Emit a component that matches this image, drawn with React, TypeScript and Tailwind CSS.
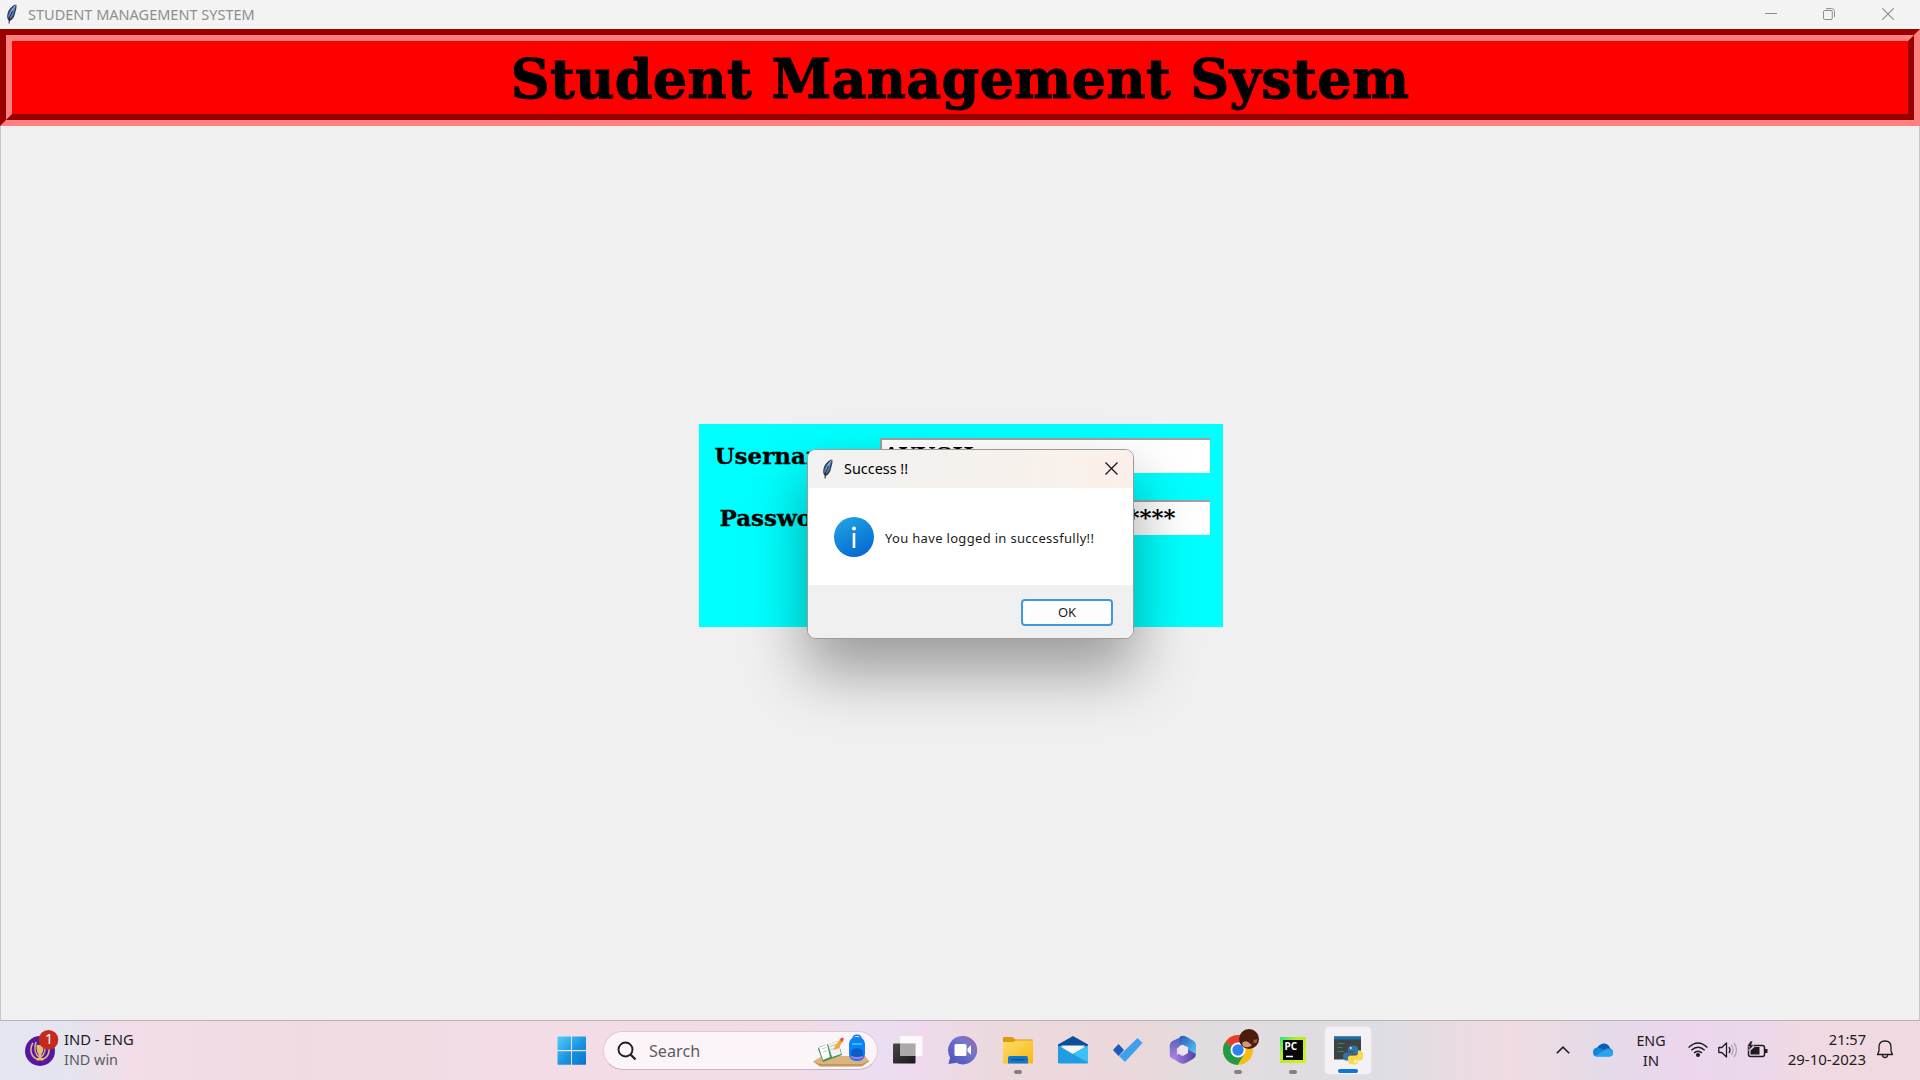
import React from "react";

const segoe = "font-['Noto_Sans',sans-serif]";
const bookman = "font-['DejaVu_Serif',serif] font-bold";

function Feather({ className }: { className?: string }) {
  return (
    <svg viewBox="0 0 12 20" className={className}>
      <path d="M10.200.5C7 .8 3 4.500 1.700 9c-.7 2.600-.6 4.500 0 6.200L3.200 17c3-.6 5-3.500 5.700-7C9.700 6.500 11.200 3 10.200.5Z" fill="#343a47" />
      <path d="M9.600 1.600C6.500 3.500 3.500 6.800 2.500 10.500c-.4 2-.2 3.300.6 4.700 2.600-1 4.200-3.700 4.900-6.700.5-2.300 1.600-4.200 1.600-6.900Z" fill="#4c82ca" />
      <path d="M9.600 1.500C7 3.500 4.800 8 3.700 13" stroke="#bcd4f0" strokeWidth=".8" fill="none" />
      <path d="M6.500 7 3.300 14l-.2 5.500" stroke="#1a1d22" strokeWidth="1" fill="none" />
    </svg>
  );
}

function WindowButtons() {
  return (
    <div className="flex items-center pr-[26px]">
      <svg viewBox="0 0 12 12" className="h-[12px] w-[12px]" fill="none" stroke="#8c8c8c">
        <path d="M0 5.500h12" />
      </svg>
      <svg viewBox="0 0 12 12" className="ml-[46px] h-[12px] w-[12px]" fill="none" stroke="#8c8c8c">
        <rect x=".5" y="2.500" width="8.800" height="9" rx="1.300" />
        <path d="M3 .6h5.500a3 3 0 0 1 3 3V9" />
      </svg>
      <svg viewBox="0 0 12 12" className="ml-[47px] h-[12px] w-[12px]" fill="none" stroke="#8c8c8c" strokeWidth="1.1">
        <path d="m.3.3 11.400 11.400M11.700.3.3 11.700" />
      </svg>
    </div>
  );
}

function AppTitleBar() {
  return (
    <header className="flex h-[29px] shrink-0 items-center bg-[#f3f3f3] pb-px">
      <Feather className="ml-[6px] h-[20px] w-[12px]" />
      <div className={`${segoe} ml-[10px] flex-1 text-[#8e8e8e]`}>
        <span className="inline-block origin-left scale-x-[0.967] whitespace-nowrap text-[15px] leading-[20px]">STUDENT MANAGEMENT SYSTEM</span>
      </div>
      <WindowButtons />
    </header>
  );
}

function Banner() {
  return (
    <div className="h-[97px] shrink-0 border-[6px] border-t-[#990000] border-r-[#ff8080] border-b-[#ff8080] border-l-[#990000]">
      <div className="flex h-full items-center justify-center border-[6px] border-t-[#ff8080] border-r-[#990000] border-b-[#990000] border-l-[#ff8080] bg-[#ff0000] pt-[3px]">
        <h1 className={`${bookman} whitespace-nowrap text-[54px] leading-none tracking-[0.3px] text-black [-webkit-text-stroke:1px_black]`}>Student Management System</h1>
      </div>
    </div>
  );
}

function Entry({ children }: { children: React.ReactNode }) {
  return (
    <div className={`${bookman} flex h-[35px] w-[330px] items-start border-t-2 border-l-2 border-[#a0a0a0] bg-white pl-[2px] text-[23px] leading-[27px] text-black`}>
      {children}
    </div>
  );
}

function LoginForm() {
  return (
    <form className="mt-[298px] ml-px flex h-[203px] w-[524px] flex-col gap-[27px] self-center bg-[#00ffff] pt-[14px] pr-[13px]">
      <div className="flex justify-between pl-[16px]">
        <label className={`${bookman} pt-[4px] text-[23px] leading-[27px] [-webkit-text-stroke:0.3px_black]`}>Username</label>
        <Entry>
          <span className="-ml-px pt-[1px]">AYUSH</span>
        </Entry>
      </div>
      <div className="flex justify-between pl-[21px]">
        <label className={`${bookman} pt-[4px] text-[23px] leading-[27px] [-webkit-text-stroke:0.3px_black]`}>Password</label>
        <Entry>
          <span className="w-[292px] pt-[1px] text-right">****</span>
        </Entry>
      </div>
    </form>
  );
}

function Dialog() {
  return (
    <div className={`${segoe} absolute top-[449px] left-[807px] flex h-[190px] w-[327px] flex-col overflow-hidden rounded-[9px] border border-[#9b9b9b] bg-white text-black shadow-[0_32px_60px_2px_rgba(0,0,0,0.35)]`}>
      <div className="flex h-[38px] items-center bg-gradient-to-r from-[#f2f2f2] via-[#f5f1ed] to-[#fbf0e9] pr-[15px] pb-px pl-[14px]">
        <Feather className="h-[20px] w-[12px]" />
        <span className="-mt-px ml-[10px] flex-1">
          <span className="inline-block origin-left scale-x-[0.96] text-[15px] leading-[20px]">Success !!</span>
        </span>
        <svg viewBox="0 0 13 13" className="h-[13px] w-[13px]" fill="none" stroke="#111" strokeWidth="1.2">
          <path d="m.5.500 12 12M12.500.5l-12 12" />
        </svg>
      </div>
      <div className="flex h-[97px] items-center pl-[26px]">
        <svg viewBox="0 0 40 40" className="h-[40px] w-[40px]">
          <defs>
            <linearGradient id="info" x1=".2" y1="0" x2=".7" y2="1">
              <stop offset="0" stopColor="#20a2e4" />
              <stop offset="1" stopColor="#0469d0" />
            </linearGradient>
          </defs>
          <circle cx="20" cy="20" r="20" fill="url(#info)" />
          <circle cx="20" cy="11.5" r="2" fill="#fff" />
          <path d="M20 16v15" stroke="#fff" strokeWidth="2.6" />
        </svg>
        <span className="ml-[11px] whitespace-nowrap pt-[4px] text-[13px] tracking-[0.32px] text-[#1c1c1c]">You have logged in successfully!!</span>
      </div>
      <div className="flex flex-1 items-start justify-end bg-[#f0f0f0] pt-[14px] pr-[20px]">
        <button className="flex h-[27px] w-[92px] items-center justify-center rounded-[4px] border-2 border-[#3f97de] bg-[#fdfdfd] text-[13px] text-[#1c1c1c]">OK</button>
      </div>
    </div>
  );
}

function Weather() {
  return (
    <div className="flex w-[160px] items-center pb-[4px]">
      <svg viewBox="0 0 36 38" className="ml-[24px] h-[38px] w-[36px]">
        <circle cx="16" cy="21" r="15" fill="#56189e" />
        <path d="M9 13c-4 6-2 14 4 16M23 13c4 6 2 14-4 16M12 12c-2 6-1 12 3 15M20 12c2 6 1 12-3 15" stroke="#dfb583" strokeWidth="1.6" fill="none" />
        <path d="M12.500 15h7c0 6-1 8-2.500 10v3h2.500v2.500h-7V28H15v-3c-1.500-2-2.500-4-2.500-10Z" fill="#e7bd70" />
        <circle cx="24.500" cy="9.800" r="9.8" fill="#c42b1c" />
      </svg>
      <span className={`${segoe} -mt-[20px] -ml-[15px] w-[12px] text-[14px] leading-none text-white`}>1</span>
      <div className={`${segoe} ml-[7px] text-[15px] leading-[20px]`}>
        <div className="origin-left scale-x-[0.985] whitespace-nowrap text-[#1b1b1b]">IND - ENG</div>
        <div className="origin-left scale-x-[0.96] text-[#5c5a5e]">IND win</div>
      </div>
    </div>
  );
}

function StartIcon() {
  return (
    <svg viewBox="0 0 30 30" className="h-[30px] w-[30px]">
      <defs>
        <linearGradient id="win" x1="0" y1="0" x2="1" y2="1">
          <stop offset="0" stopColor="#50d0fb" />
          <stop offset=".55" stopColor="#1a93e0" />
          <stop offset="1" stopColor="#0673cd" />
        </linearGradient>
      </defs>
      <path fill="url(#win)" d="M1 .5h13V14H.5V1zM15 .5h13.500l.5.500v13H15zM.5 15.200H14v13.500H1l-.5-.5zM15 15.200h14v13l-.5.500H15z" />
    </svg>
  );
}

function StudyArt() {
  return (
    <svg viewBox="0 0 60 36" className="h-[36px] w-[60px]">
      <path d="M3 28.500 12 23h43l4 5-7 5H10Z" fill="#dcb27f" />
      <path d="m3 28.500 7 2.500h42l7-3.500v1l-7 5H10z" fill="#c39660" />
      <path d="m8 16 1-2 19-6 4 14-19 7z" fill="#419557" />
      <path d="m9 14.500 8-3 3 12.500-7 3z" fill="#fff" />
      <path d="m18 11 10-3 3 13-9 3z" fill="#f3f1f4" />
      <path d="m12 16 4-1.500M13 19l4-1.500M20 13.500l6-2M21 16.500l6-2" stroke="#aaa" strokeWidth=".7" />
      <path d="m24 17 1-4 5-6.500 3 2-5 7z" fill="#f8a62b" />
      <path d="m29.500 7 2-2.500 2.500 1L32.500 9z" fill="#e64d48" />
      <path d="M43 6c0-5 8-5 8 0" stroke="#2071d8" strokeWidth="1.5" fill="none" />
      <rect x="39" y="4" width="16" height="24" rx="7" fill="#0b82f5" />
      <path d="M41 19c1-5 11-5 12 0v7H41z" fill="#0d5cc6" />
      <path d="M42 11h10" stroke="#38b9ff" strokeWidth="2" />
      <path d="M41 24q6 2 12 0" stroke="#bd76f1" strokeWidth="2" fill="none" />
    </svg>
  );
}

function SearchBox() {
  return (
    <div className="ml-[16px] flex h-[39px] w-[275px] items-center rounded-full border border-[#dfcbd8] border-b-[#c9b4c2] bg-[#fbf5f9]">
      <svg viewBox="0 0 20 20" className="ml-[13px] h-[20px] w-[20px]" fill="none" stroke="#242124" strokeWidth="1.9">
        <circle cx="8.500" cy="8.500" r="7" />
        <path d="m13.500 13.500 5 5" strokeWidth="2.3" />
      </svg>
      <span className={`${segoe} ml-[12px] flex-1 text-[#5f5b60]`}>
        <span className="inline-block origin-left scale-x-[0.95] text-[17px]">Search</span>
      </span>
      <div className="mr-[7px]">
        <StudyArt />
      </div>
    </div>
  );
}

function TaskIcon({ children, dot }: { children: React.ReactNode; dot?: boolean }) {
  return (
    <div className="flex h-full w-[55px] flex-col items-center pt-[12px]">
      <svg viewBox="0 0 32 34" className="h-[34px] w-[32px] overflow-visible">
        {children}
      </svg>
      {dot && <div className="mt-[3px] h-[4px] w-[8px] rounded-full bg-[#868082]" />}
    </div>
  );
}

function TaskIcons() {
  return (
    <div className="ml-[2px] flex h-full">
      <TaskIcon>
        <defs>
          <linearGradient id="tv" x1="0" y1="0" x2="1" y2="1">
            <stop offset="0" stopColor="#484848" />
            <stop offset="1" stopColor="#171717" />
          </linearGradient>
          <linearGradient id="chat" x1="1" y1="0" x2="0" y2="1">
            <stop offset="0" stopColor="#a45f9a" />
            <stop offset=".35" stopColor="#7577cb" />
            <stop offset="1" stopColor="#4a4dbc" />
          </linearGradient>
          <linearGradient id="folder" x1="0" y1="0" x2="1" y2="1">
            <stop offset="0" stopColor="#ffdc6b" />
            <stop offset="1" stopColor="#f9b80f" />
          </linearGradient>
          <linearGradient id="m365a" x1="0" y1="0" x2="0" y2="1">
            <stop offset="0" stopColor="#4c5fc0" />
            <stop offset="1" stopColor="#b482de" />
          </linearGradient>
          <linearGradient id="m365b" x1="0" y1="0" x2="1" y2="1">
            <stop offset="0" stopColor="#2c55b5" />
            <stop offset="1" stopColor="#53ccf5" />
          </linearGradient>
          <linearGradient id="m365c" x1="0" y1="0" x2="1" y2="0">
            <stop offset="0" stopColor="#b989e8" />
            <stop offset="1" stopColor="#4f3fa4" />
          </linearGradient>
          <linearGradient id="pc" x1="0" y1="0" x2="1" y2="1">
            <stop offset="0" stopColor="#1fe87c" />
            <stop offset=".35" stopColor="#b6ea2c" />
            <stop offset="1" stopColor="#d9f01e" />
          </linearGradient>
        </defs>
        <rect x="1" y="10.500" width="22.500" height="20" rx="1" fill="url(#tv)" />
        <rect x="8" y="3" width="22.500" height="20" rx="1" fill="#fff" fillOpacity=".8" />
        <path d="M8 10.500h15.500V23H8z" fill="#9c999b" fillOpacity=".75" />
      </TaskIcon>
      <TaskIcon>
        <path d="M15.500 3a14.200 14.200 0 1 1-6 26.800L1.500 31l1.600-6.500A14.300 14.300 0 0 1 15.500 3Z" fill="url(#chat)" />
        <rect x="7.500" y="11" width="12" height="12" rx="1.5" fill="#fff" />
        <path d="m20.500 15.500 3.500-3.300v9.600l-3.500-3.300z" fill="#fff" />
      </TaskIcon>
      <TaskIcon dot>
        <path d="M1 5q0-1 1-1h8.500l3 2.500H30q1 0 1 1V12H1z" fill="#dc9a0d" />
        <path d="M1 9h10l3-1.500h17V29.500q0 1-1 1H2q-1 0-1-1z" fill="url(#folder)" />
        <path d="M6 30.500V25q0-2 2-2h16q2 0 2 2v5.500z" fill="#1078cc" />
        <path d="M9.500 26.700h13" stroke="#0b4e92" strokeWidth="1.2" />
      </TaskIcon>
      <TaskIcon>
        <path d="M1 11.500 16 3l15 8.500v2H1z" fill="#0a4f9c" />
        <path d="M4 12.500h24L16 22z" fill="#f6f4f5" />
        <path d="M31 12.500v17q0 1-1 1H2q-1 0-1-1v-17l14.800 8.500z" fill="#219ce4" />
        <path d="M31 12.500v17L16 21z" fill="#3ac2f4" />
      </TaskIcon>
      <TaskIcon>
        <path d="m1 17 5.500-6 5.500 6-5.500 6z" fill="#1b59ba" />
        <path d="M7 23 25.500 5l5 5L13 29z" fill="#41a0ec" />
      </TaskIcon>
      <TaskIcon>
        <path d="M16 3 5.500 8Q2.800 9.500 2.800 12v10.500q0 1.500 1.500 2.500l5.500 2V15.500l3.800-2.500z" fill="url(#m365a)" />
        <path d="M13 3.500q3-1.500 6 0L26 7.500q3 1.500 3 5V21l-8-3.500V14l-9-3z" fill="url(#m365b)" />
        <path d="M4 24.500 11.500 21l4 2 5.500-3.500v-3l8 4.500q0 3-3 5l-7 4q-3 1.500-6 0z" fill="url(#m365c)" />
        <path d="m12 13.500 4.500-1.500 4.500 3v5l-4.500 2.500-4.500-2.500z" fill="#ece6ec" />
      </TaskIcon>
      <TaskIcon dot>
        <circle cx="16" cy="17" r="15" fill="#f7bd13" />
        <path d="M16 17 3.100 9.500A15 15 0 0 1 29 9.600H16Z" fill="#e43e31" />
        <path d="M16 17 3.100 9.300A15 15 0 0 0 15.500 32l7-11z" fill="#249a48" />
        <circle cx="16" cy="17" r="7.500" fill="#fff" />
        <circle cx="16" cy="17" r="5.7" fill="#327ff0" />
        <circle cx="27" cy="6" r="10" fill="#4b1d0c" />
        <path d="M20 10q3-3 6-1l4 3q-4 4-9 1z" fill="#cd9a72" />
        <path d="m31.500 7 4-1-1 4h-3z" fill="#9c5b39" />
      </TaskIcon>
      <TaskIcon dot>
        <rect x="3" y="4" width="26" height="26" fill="url(#pc)" />
        <rect x="6" y="7" width="20" height="20" fill="#080808" />
        <path d="M9 23.500h7" stroke="#fff" strokeWidth="1.5" />
        <text x="7.500" y="17" fill="#fff" fontSize="10" fontWeight="700" fontFamily="Noto Sans, sans-serif">PC</text>
      </TaskIcon>
      <div className="mt-[5px] ml-[4px] flex h-[49px] w-[48px] flex-col items-center self-start rounded-[5px] border border-[#e5e2e5] bg-[#f3f1f3] pt-[9px]">
        <svg viewBox="0 0 28 28" className="h-[29px] w-[28px] overflow-visible">
          <rect width="27" height="23" fill="#3c4246" />
          <path d="M0 0h27v3H0z" fill="#1b6fae" />
          <path d="M3.500 7h7M3.500 11h5M3.500 15h7" stroke="#378646" strokeWidth="1" />
          <path d="M19 9q-5 0-5 3v3h6v1h-8q-3 0-3 4t3 4h2v-3q0-3 3-3h5q2 0 2-2v-4q0-3-5-3Z" fill="#3673a5" />
          <path d="M19 28q-5 0-5-3v-4q0-2 2-2h5q3 0 3-3v-2h2q3 0 3 5t-3 5h-6v1h4v1q0 2-5 2Z" fill="#fbd84b" />
          <circle cx="16.800" cy="11.500" r=".9" fill="#fff" />
          <circle cx="21.500" cy="25.500" r=".9" fill="#fff" />
        </svg>
        <div className="mt-[4px] h-[4px] w-[20px] rounded-full bg-[#0a78d4]" />
      </div>
    </div>
  );
}

function Tray() {
  return (
    <div className={`${segoe} flex items-center pb-[2px] text-[15px] leading-[20px] text-[#1d1b1e]`}>
      <svg viewBox="0 0 14 8" className="h-[8px] w-[14px]" fill="none" stroke="#201c20" strokeWidth="1.6">
        <path d="m.8 7.200 6.200-6 6.200 6" />
      </svg>
      <svg viewBox="0 0 20 14" className="ml-[23px] h-[14px] w-[20px]">
        <path d="M4 5q3-5 8-4.500 4 1 5 4.500l-3 5H2z" fill="#0a5bb5" />
        <path d="M4 4.500Q0 5 0 9.500 0 13.500 4 13.500h12q4 0 4-4 0-4-4-4.500-3 0-5 2L7 5Q5.200 4.200 4 4.500Z" fill="#1386dc" />
        <path d="m2 13 9-5.500q3-2 6-1 3 1 3 4t-3.500 3H4q-1 0-2-.5Z" fill="#29a5ee" />
      </svg>
      <div className="ml-[22px] w-[32px] text-center">
        <div className="scale-x-[0.95]">ENG</div>
        <div>IN</div>
      </div>
      <svg viewBox="0 0 20 15" className="ml-[21px] h-[15px] w-[20px]" fill="none" stroke="#1d1b1e" strokeWidth="1.4">
        <path d="M.6 5.500q9.400-9 18.800 0M3.300 8.300q6.700-6.200 13.400 0M6 11q4-3.500 8 0" />
        <circle cx="10" cy="13" r="1.3" fill="#1d1b1e" />
      </svg>
      <svg viewBox="0 0 20 16" className="ml-[10px] h-[16px] w-[20px]" fill="none" stroke="#1d1b1e" strokeWidth="1.3">
        <path d="M.8 5.500h3L8.500 1v14l-4.700-4.500h-3z" strokeLinejoin="round" />
        <path d="M11 5q2 3 0 6" />
        <path d="M13.300 3q3.600 5 0 10M16 1q5 7 0 14" stroke="#b3a5b2" />
      </svg>
      <svg viewBox="0 0 21 17" className="ml-[9px] h-[17px] w-[21px]">
        <rect x="1.500" y="4.500" width="16" height="11" rx="2" fill="none" stroke="#1d1b1e" strokeWidth="1.5" />
        <path d="M3.500 13.500V9.500l4-3.500h5v7.500z" fill="#1d1b1e" />
        <path d="M18 8h2.500v4H18z" fill="#1d1b1e" />
        <path d="M3.500 0 0 5.500h2.500L1.500 10 7 4H4.500L5.500 0z" fill="#1d1b1e" stroke="#edd8ea" strokeWidth=".5" />
      </svg>
      <div className="-mt-[2px] ml-[19px] w-[79px] text-right whitespace-nowrap">
        <div className="origin-right scale-x-[0.97]">21:57</div>
        <div className="flex justify-end">29-10-2023</div>
      </div>
      <svg viewBox="0 0 18 19" className="mr-[26px] ml-[10px] h-[19px] w-[18px]" fill="none" stroke="#1d1b1e" strokeWidth="1.3" strokeLinejoin="round">
        <path d="M1.500 14.500 3 11V7q0-6 6-6t6 6v4l1.500 3.500z" />
        <path d="M6.500 15q0 2.500 2.500 2.500t2.500-2.500" />
      </svg>
    </div>
  );
}

function Taskbar() {
  return (
    <footer className="flex h-[60px] shrink-0 items-center border-t border-[#b9b1b6] bg-[linear-gradient(90deg,#e3e6f0_0px,#e5e4ef_70px,#f2dde8_130px,#f0dbe2_300px,#f3dce6_560px,#f1dce7_800px,#ebdef2_880px,#eedaec_920px,#ebd9dd_1000px,#ebd8da_1130px,#e1dcde_1200px,#dfdde4_1380px,#f0dbe2_1510px,#e4dbe8_1600px,#ecd6ee_1680px,#ebd8ec_1750px,#f0d9e2_1810px,#f0d9e0_1920px)]">
      <Weather />
      <div className="ml-[397px] flex h-full items-center">
        <StartIcon />
        <SearchBox />
        <TaskIcons />
      </div>
      <div className="flex-1" />
      <Tray />
    </footer>
  );
}

export default function App() {
  return (
    <div className="relative flex h-[1080px] w-[1920px] flex-col overflow-hidden bg-[#f0f0f0]">
      <AppTitleBar />
      <Banner />
      <main className="flex flex-1 flex-col border-x border-[#c9c9c9]">
        <LoginForm />
      </main>
      <Taskbar />
      <Dialog />
    </div>
  );
}
